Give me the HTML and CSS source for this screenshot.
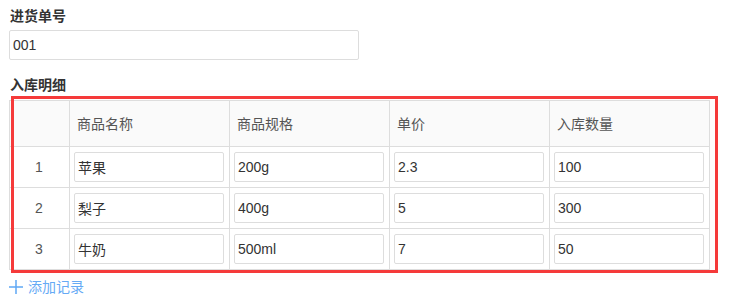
FILE: index.html
```html
<!DOCTYPE html>
<html lang="zh-CN">
<head>
    <meta charset="UTF-8">
    <meta name="viewport" content="width=device-width, initial-scale=1.0">
    <title>进货入库</title>
    <link rel="stylesheet" href="styles.css">
</head>
<body>
    <div class="form">
        <label class="field-label">进货单号</label>
        <input type="text" class="order-input" value="001">

        <label class="field-label detail-label">入库明细</label>
        <div class="table-wrap">
            <table class="detail-table">
                <colgroup>
                    <col class="col-index">
                    <col class="col-item">
                    <col class="col-item">
                    <col class="col-item">
                    <col class="col-item">
                </colgroup>
                <thead>
                    <tr>
                        <th></th>
                        <th>商品名称</th>
                        <th>商品规格</th>
                        <th>单价</th>
                        <th>入库数量</th>
                    </tr>
                </thead>
                <tbody>
                    <tr>
                        <td class="index">1</td>
                        <td><input type="text" value="苹果"></td>
                        <td><input type="text" value="200g"></td>
                        <td><input type="text" value="2.3"></td>
                        <td><input type="text" value="100"></td>
                    </tr>
                    <tr>
                        <td class="index">2</td>
                        <td><input type="text" value="梨子"></td>
                        <td><input type="text" value="400g"></td>
                        <td><input type="text" value="5"></td>
                        <td><input type="text" value="300"></td>
                    </tr>
                    <tr>
                        <td class="index">3</td>
                        <td><input type="text" value="牛奶"></td>
                        <td><input type="text" value="500ml"></td>
                        <td><input type="text" value="7"></td>
                        <td><input type="text" value="50"></td>
                    </tr>
                </tbody>
            </table>
            <div class="highlight"></div>
        </div>

        <a class="add-row" href="#">
            <svg width="14" height="14" viewBox="0 0 14 14">
                <path d="M7 0V14M0 7H14" stroke="#5fa8f5" stroke-width="1.5" fill="none"/>
            </svg>
            添加记录
        </a>
    </div>
</body>
</html>
```

FILE: styles.css
```css
body {
    margin: 0;
    padding: 0 9px;
    font-family: "Liberation Sans", "Noto Sans CJK SC", sans-serif;
    font-size: 14px;
    color: #333;
    background: #fff;
}
.form {
    display: flex;
    flex-direction: column;
    align-items: flex-start;
    padding-top: 6px;
}
.field-label {
    display: block;
    font-weight: bold;
    line-height: 20px;
    padding-left: 1px;
    margin-bottom: 4px;
}
.detail-label {
    margin-top: 15px;
    margin-bottom: 5px;
}
input {
    box-sizing: border-box;
    height: 30px;
    border: 1px solid #ddd;
    border-radius: 2px;
    padding: 0 3px;
    font-family: "Liberation Sans", "Noto Sans CJK SC", sans-serif;
    font-size: 14px;
    color: #333;
    outline: none;
}
.order-input {
    width: 350px;
}
.table-wrap {
    position: relative;
}
.detail-table {
    border-collapse: collapse;
    table-layout: fixed;
    width: 701px;
}
.col-index {
    width: 60px;
}
.col-item {
    width: 160px;
}
.detail-table th,
.detail-table td {
    border: 1px solid #ddd;
}
.detail-table th {
    height: 45px;
    padding: 0 7px;
    background: #fafafa;
    color: #555;
    font-weight: normal;
    text-align: left;
    line-height: 20px;
}
.detail-table td {
    height: 40px;
    box-sizing: border-box;
    padding: 5px 5px 5px 4px;
}
.detail-table td input {
    width: 100%;
    display: block;
}
.detail-table td.index {
    text-align: center;
    color: #555;
}
.highlight {
    position: absolute;
    left: 2px;
    top: -4px;
    width: 707px;
    height: 177px;
    box-sizing: border-box;
    border: 3px solid #f53a3a;
    pointer-events: none;
}
.add-row {
    display: flex;
    align-items: center;
    gap: 5px;
    margin-top: 7px;
    color: #66aaf5;
    text-decoration: none;
    line-height: 20px;
}
```
